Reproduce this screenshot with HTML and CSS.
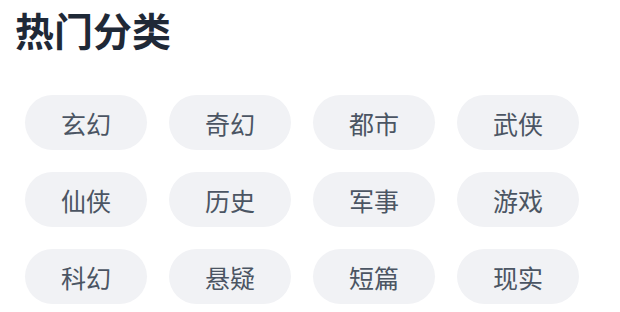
FILE: index.html
```html
<!DOCTYPE html>
<html lang="zh">
<head>
<meta charset="utf-8">
<link rel="stylesheet" href="styles.css">
</head>
<body>
<section class="hot">
  <h2 class="hot-title">热门分类</h2>
  <div class="tag-grid">
    <span class="tag">玄幻</span>
    <span class="tag">奇幻</span>
    <span class="tag">都市</span>
    <span class="tag">武侠</span>
    <span class="tag">仙侠</span>
    <span class="tag">历史</span>
    <span class="tag">军事</span>
    <span class="tag">游戏</span>
    <span class="tag">科幻</span>
    <span class="tag">悬疑</span>
    <span class="tag">短篇</span>
    <span class="tag">现实</span>
  </div>
</section>
</body>
</html>
```
FILE: styles.css
```css
html, body {
  margin: 0;
  padding: 0;
  background: #ffffff;
}
body {
  font-family: "Noto Sans CJK SC", "Noto Sans", sans-serif;
}
.hot {
  padding: 7px 0 0 15px;
}
.hot-title {
  margin: 0;
  font-size: 39px;
  line-height: 44px;
  font-weight: 700;
  color: #1f2937;
}
.tag-grid {
  display: grid;
  grid-template-columns: repeat(4, 122px);
  grid-auto-rows: 55px;
  column-gap: 22px;
  row-gap: 22px;
  margin: 44px 0 0 10px;
}
.tag {
  display: flex;
  align-items: center;
  justify-content: center;
  background: #f1f2f5;
  border-radius: 28px;
  color: #4b5563;
  font-size: 25px;
}
```
